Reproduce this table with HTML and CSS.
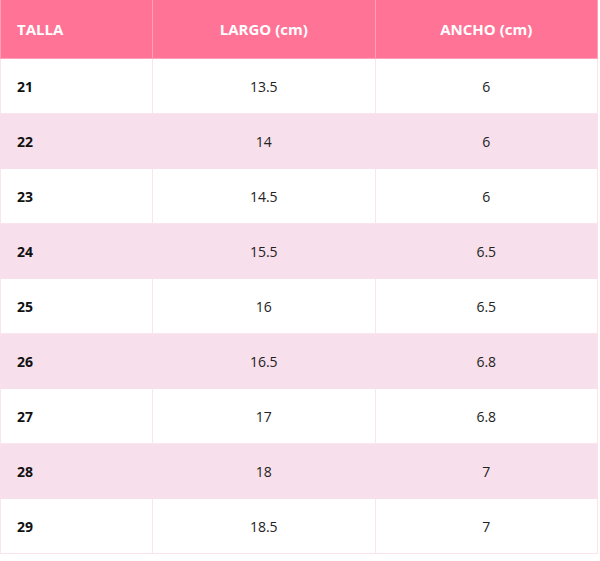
FILE: index.html
```html
<!DOCTYPE html>
<html lang="es">
<head>
<meta charset="utf-8">
<link rel="stylesheet" href="styles.css">
</head>
<body>
<table class="size-table">
  <thead>
    <tr><th class="c1">TALLA</th><th>LARGO (cm)</th><th>ANCHO (cm)</th></tr>
  </thead>
  <tbody>
    <tr><td class="c1">21</td><td>13.5</td><td>6</td></tr>
    <tr class="alt"><td class="c1">22</td><td>14</td><td>6</td></tr>
    <tr><td class="c1">23</td><td>14.5</td><td>6</td></tr>
    <tr class="alt"><td class="c1">24</td><td>15.5</td><td>6.5</td></tr>
    <tr><td class="c1">25</td><td>16</td><td>6.5</td></tr>
    <tr class="alt"><td class="c1">26</td><td>16.5</td><td>6.8</td></tr>
    <tr><td class="c1">27</td><td>17</td><td>6.8</td></tr>
    <tr class="alt"><td class="c1">28</td><td>18</td><td>7</td></tr>
    <tr><td class="c1">29</td><td>18.5</td><td>7</td></tr>
  </tbody>
</table>
</body>
</html>
```
FILE: styles.css
```css
html, body { margin: 0; padding: 0; background: #fff; }
body { font-family: "Open Sans", "Noto Sans", sans-serif; font-size: 14px; color: #222; }
.size-table {
  width: 598px;
  border-collapse: collapse;
  table-layout: fixed;
}
.size-table th, .size-table td {
  border: 1px solid #fbe4ee;
  text-align: center;
  padding: 0 16px;
}
.size-table th {
  background: #ff7396;
  color: #fff;
  font-weight: 700;
  height: 58px;
  font-size: 15px;
  border-top: none;
  border-color: #ffa0ba;
}
.size-table th.c1 { width: 119px; }
.size-table td { height: 54px; }
.size-table .c1 { text-align: left; font-weight: 700; color: #111; }
.size-table th.c1 { color: #fff; }
.size-table tr.alt td { background: #f7dfeb; border-color: #f7dfeb; }
```
